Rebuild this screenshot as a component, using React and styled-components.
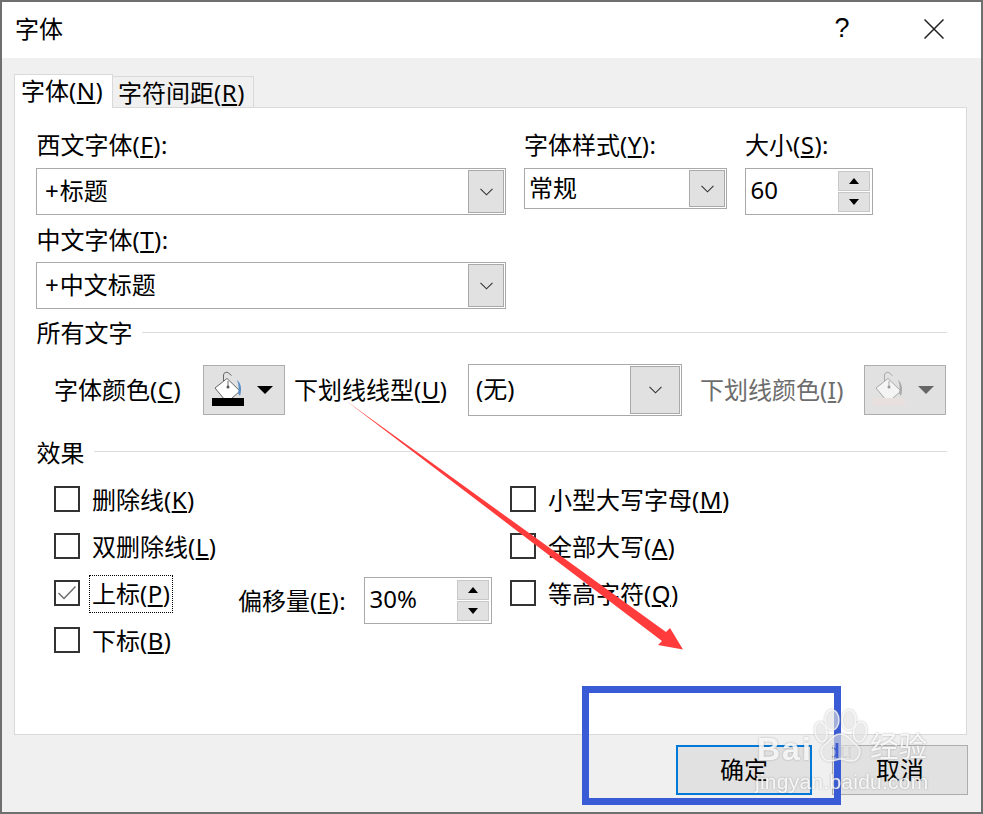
import React from "react";
import styled, { createGlobalStyle } from "styled-components";

const Global = createGlobalStyle`
  html, body { margin: 0; padding: 0; background: #f0f0f0; }
  * { box-sizing: border-box; }
  body { font-family: "Noto Sans", "Noto Sans CJK SC", sans-serif; font-size: 24px; color: #000; }
`;

const Dialog = styled.div`
  position: relative; width: 983px; height: 814px; overflow: hidden;
  display: flex; flex-direction: column;
  background: #f0f0f0;
  border: 2px solid #6f6f6f;
`;
const TitleBar = styled.header`
  height: 56px; flex: none; background: #fff; display: flex; align-items: center;
  padding-left: 13px; line-height: 1;
`;
const TitleText = styled.div` flex: 1; margin-top: -2px; `;
const HelpMark = styled.div` width: 82px; text-align: center; font-size: 27px; margin-top: -4px; margin-right: 41px; font-family: "Liberation Sans", sans-serif; `;
const CloseMark = styled.svg` width: 20px; height: 20px; margin-right: 37px; margin-top: -2px; `;
const Content = styled.div`
  flex: 1; display: flex; flex-direction: column; padding: 16px 13px 0 12px;
`;
const Tabs = styled.div` display: flex; align-items: flex-end; height: 34px; margin-bottom: -1px; position: relative; z-index: 1; `;
const Tab = styled.div`
  height: ${p => (p.$active ? 34 : 32)}px; width: ${p => p.$w}px; padding-left: ${p => p.$pad}px;
  background: ${p => (p.$active ? "#fff" : "#f0f0f0")};
  border: 1px solid #d9d9d9; border-bottom: ${p => (p.$active ? "none" : "1px solid #d9d9d9")};
  ${p => (p.$active ? "" : "border-left: none;")}
  line-height: 32px; white-space: nowrap;
`;
const Panel = styled.main`
  height: 628px; flex: none; margin-right: 1px; background: #fff; border: 1px solid #d9d9d9;
  padding: 23px 19px 0 21px;
`;
const FontGrid = styled.div`
  display: grid; grid-template-columns: 470px 203px 128px; column-gap: 18px; align-items: start;
`;
const Field = styled.div` display: flex; flex-direction: column; `;
const Label = styled.label`
  height: 28px; line-height: 28px; margin-top: ${p => p.$top ?? 0}px; margin-bottom: ${p => p.$gap ?? 9}px;
  padding-left: ${p => p.$pad ?? 0}px; white-space: nowrap;
`;
const Latin = styled.span` letter-spacing: .5px; `;
const Combo = styled.div`
  width: ${p => p.$w}px; height: ${p => p.$h}px; flex: none; display: flex; padding: 1px;
  border: 1px solid #a9a9a9; background: #fff;
`;
const ComboText = styled.div`
  flex: 1; padding-left: ${p => p.$pad}px; line-height: ${p => p.$lh}px; white-space: nowrap;
`;
const Plus = styled.span` margin-right: 1px; `;
const ComboButton = styled.div`
  width: ${p => p.$w}px; flex: none; display: flex; align-items: center; justify-content: center;
  background: #e1e1e1; border: 1px solid #a9a9a9;
`;
const Chevron = styled.svg` width: 13px; height: 8px; `;
const Spin = styled.div`
  width: 128px; height: 47px; flex: none; display: flex; border: 1px solid #a9a9a9; background: #fff; padding: 2px;
`;
const SpinValue = styled.div` flex: 1; padding-left: 2.500px; line-height: 37px; `;
const SpinButtons = styled.div` width: 32px; flex: none; display: flex; flex-direction: column; gap: 1px; `;
const SpinButton = styled.div`
  flex: 1; background: #e1e1e1; border: 1px solid #c8c8c8; display: flex; align-items: center; justify-content: center;
`;
const Tri = styled.svg` width: 10px; height: 6px; display: block; `;
const SectionHead = styled.div`
  display: flex; align-items: center; gap: 9px; height: 30px; margin-top: ${p => p.$top}px; padding-left: .5px; line-height: 30px;
`;
const Rule = styled.div` flex: 1; height: 1px; background: #dcdcdc; margin-top: ${p => p.$off}px; `;
const ColorRow = styled.div`
  display: grid; grid-template-columns: 167px 82px 183px 214px 182px 82px; align-items: center; height: 52px; margin-top: 16px;
`;
const RowLabel = styled.div`
  padding-left: ${p => p.$pad}px; white-space: nowrap; line-height: 30px; color: ${p => (p.$disabled ? "#6d6d6d" : "#000")};
`;
const ColorButton = styled.div`
  height: 50px; background: #e1e1e1; border: 1px solid #adadad; position: relative;
`;
const BucketIcon = styled.svg` width: 80px; height: 48px; display: block; `;
const Effects = styled.div` display: flex; margin-top: 7px; `;
const Col = styled.div` width: ${p => p.$w}px; padding-left: ${p => p.$pad}px; `;
const CheckRow = styled.div` height: 47px; display: flex; align-items: center; `;
const CheckItem = styled.div` display: flex; align-items: center; width: ${p => p.$w ?? "auto"}; flex: none; `;
const Box = styled.span`
  width: 26px; height: 26px; flex: none; border: 2px solid #333; background: #fff; display: flex; align-items: center; justify-content: center;
`;
const CheckText = styled.span`
  margin-left: ${p => (p.$focus ? 10 : 12)}px; margin-top: 2px; line-height: 30px; white-space: nowrap;
  ${p => (p.$focus ? "outline: 1px dotted #000; padding: 3px 2px;" : "")}
`;
const Offset = styled.div` display: flex; align-items: center; margin-top: 15px; `;
const OffsetLabel = styled.span` width: 126px; white-space: nowrap; line-height: 30px; margin-top: 2px; `;
const Footer = styled.footer` display: flex; justify-content: flex-end; gap: 20px; padding-top: 10px; `;
const Btn = styled.button`
  width: 136px; height: 50px; padding: 0; font: inherit; color: #000; background: #e1e1e1; line-height: 1;
  border: ${p => (p.$primary ? "2px solid #0078d7" : "1px solid #adadad")};
`;
const BlueFrame = styled.div`
  position: absolute; left: 580px; top: 684px; width: 259px; height: 119px; border: 7px solid #3a5bd6; pointer-events: none;
`;
const ArrowLayer = styled.svg` position: absolute; left: -2px; top: -2px; width: 983px; height: 814px; pointer-events: none; `;
const Watermark = styled.div`
  position: absolute; left: 753px; top: 707px; width: 180px; height: 90px; pointer-events: none; color: rgba(255,255,255,.85);
  filter: drop-shadow(0 0 1px rgba(110,110,110,.55));
`;
const Word = styled.span`
  position: absolute; left: ${p => p.$x}px; top: ${p => p.$y}px; font-family: "Liberation Sans", "Noto Sans CJK SC", sans-serif;
  font-size: ${p => p.$s}px; font-weight: ${p => p.$b ?? 400}; line-height: 1; white-space: nowrap; letter-spacing: ${p => p.$ls ?? 0}px;
`;
const Paw = styled.svg` position: absolute; left: 58px; top: 0; width: 56px; height: 54px; `;

const L = ({ children, k, tail = "" }) => <>{children}<Latin>(<u>{k}</u>){tail}</Latin></>;
const Chev = () => <Chevron viewBox="0 0 13 8"><path d="M.5.8 6.500 6.800 12.500.8" fill="none" stroke="#333" strokeWidth="1.100" /></Chevron>;
const Check = ({ on }) => (
  <Box>{on && <svg width="20" height="16" viewBox="0 0 20 16"><path d="M1.500 8 7 13.500 18.500 1.500" fill="none" stroke="#6a6a6a" strokeWidth="1.400" /></svg>}</Box>
);
const SpinBox = ({ v }) => (
  <Spin>
    <SpinValue>{v}</SpinValue>
    <SpinButtons>
      <SpinButton><Tri viewBox="0 0 10 6"><path d="M5 0 10 6H0z" /></Tri></SpinButton>
      <SpinButton><Tri viewBox="0 0 10 6"><path d="M0 0H10L5 6z" /></Tri></SpinButton>
    </SpinButtons>
  </Spin>
);
const Bucket = ({ off }) => (
  <BucketIcon viewBox="0 0 80 48">
    <path d="M11 22 23 12.500 36 25 23 36.500z" fill={off ? "#f4f4f4" : "#fff"} stroke={off ? "#a8a8a8" : "#666"} strokeWidth="1" />
    <path d="M19.500 15V9a3 3 0 0 1 5-2l3 2.500M24 15v6" fill="none" stroke={off ? "#a8a8a8" : "#666"} strokeWidth="1" />
    <circle cx="24" cy="21" r="1.500" fill={off ? "#999" : "#555"} />
    <path d="M33 14c4 3 5 9 3 16l-2-3c1-4 1-8-1-13z" fill={off ? "#aaa" : "#5b8fc7"} />
    <rect x="8" y="32" width="32" height="8" fill={off ? "#e8dfdf" : "#000"} />
    <path d="M53 20H69L61 28z" fill={off ? "#666" : "#000"} />
  </BucketIcon>
);

export default function App() {
  return (
    <>
      <Global />
      <Dialog>
        <TitleBar>
          <TitleText>字体</TitleText>
          <HelpMark>?</HelpMark>
          <CloseMark viewBox="0 0 20 20"><path d="M.5.5 19.500 19.500M19.500.5.5 19.500" stroke="#222" strokeWidth="1.500" fill="none" /></CloseMark>
        </TitleBar>
        <Content>
          <Tabs>
            <Tab $active $w={99} $pad={6}><L k="N">字体</L></Tab>
            <Tab $w={141} $pad={5}><L k="R">字符间距</L></Tab>
          </Tabs>
          <Panel>
            <FontGrid>
              <Field>
                <Label $pad={.5}><L k="F" tail=":">西文字体</L></Label>
                <Combo $w={470} $h={47}><ComboText $pad={7} $lh={41}><Plus>+</Plus>标题</ComboText><ComboButton $w={36}><Chev /></ComboButton></Combo>
                <Label $pad={.5} $gap={8} $top={11}><L k="T" tail=":">中文字体</L></Label>
                <Combo $w={470} $h={47}><ComboText $pad={7} $lh={41}><Plus>+</Plus>中文标题</ComboText><ComboButton $w={36}><Chev /></ComboButton></Combo>
              </Field>
              <Field>
                <Label><L k="Y" tail=":">字体样式</L></Label>
                <Combo $w={203} $h={41}><ComboText $pad={3} $lh={35}>常规</ComboText><ComboButton $w={36}><Chev /></ComboButton></Combo>
              </Field>
              <Field>
                <Label><L k="S" tail=":">大小</L></Label>
                <SpinBox v="60" />
              </Field>
            </FontGrid>
            <SectionHead $top={9}>所有文字<Rule $off={-2} /></SectionHead>
            <ColorRow>
              <RowLabel $pad={18}><L k="C">字体颜色</L></RowLabel>
              <ColorButton><Bucket /></ColorButton>
              <RowLabel $pad={9}><L k="U">下划线线型</L></RowLabel>
              <Combo $w={214} $h={52}><ComboText $pad={6} $lh={46}>(无)</ComboText><ComboButton $w={50}><Chev /></ComboButton></Combo>
              <RowLabel $pad={18} $disabled><L k="I">下划线颜色</L></RowLabel>
              <ColorButton><Bucket off /></ColorButton>
            </ColorRow>
            <SectionHead $top={22}>效果<Rule $off={-4} /></SectionHead>
            <Effects>
              <Col $w={474} $pad={18}>
                <CheckRow><CheckItem><Check /><CheckText><L k="K">删除线</L></CheckText></CheckItem></CheckRow>
                <CheckRow><CheckItem><Check /><CheckText><L k="L">双删除线</L></CheckText></CheckItem></CheckRow>
                <CheckRow>
                  <CheckItem $w="184px"><Check on /><CheckText $focus><L k="P">上标</L></CheckText></CheckItem>
                  <Offset><OffsetLabel><L k="E" tail=":">偏移量</L></OffsetLabel><SpinBox v="30%" /></Offset>
                </CheckRow>
                <CheckRow><CheckItem><Check /><CheckText><L k="B">下标</L></CheckText></CheckItem></CheckRow>
              </Col>
              <Col $w={400} $pad={0}>
                <CheckRow><CheckItem><Check /><CheckText><L k="M">小型大写字母</L></CheckText></CheckItem></CheckRow>
                <CheckRow><CheckItem><Check /><CheckText><L k="A">全部大写</L></CheckText></CheckItem></CheckRow>
                <CheckRow><CheckItem><Check /><CheckText><L k="Q">等高字符</L></CheckText></CheckItem></CheckRow>
              </Col>
            </Effects>
          </Panel>
          <Footer>
            <Btn $primary>确定</Btn>
            <Btn>取消</Btn>
          </Footer>
        </Content>
        <BlueFrame />
        <ArrowLayer viewBox="0 0 983 814">
          <path d="M345 400 666 632 670 628 683 649.500 658 645 662 641z" fill="#ff3b3b" />
        </ArrowLayer>
        <Watermark>
          <Word $x={2} $y={24} $s={32} $b={700} $ls={2}>Bai</Word>
          <Paw viewBox="0 0 56 54">
            <defs>
              <mask id="du-hole">
                <rect width="56" height="54" fill="#fff" />
                <text x="14" y="49" fontFamily="Liberation Sans" fontWeight="700" fontSize="21" fill="#000">du</text>
              </mask>
            </defs>
            <g fill="rgba(255,255,255,.5)" stroke="rgba(255,255,255,.75)" strokeWidth="1.500">
              <ellipse cx="8" cy="23" rx="6" ry="10" transform="rotate(-10 8 23)" />
              <ellipse cx="19" cy="11" rx="7" ry="10" />
              <ellipse cx="36" cy="11" rx="7" ry="10" />
              <ellipse cx="47" cy="23" rx="6.500" ry="10" transform="rotate(10 47 23)" />
              <path mask="url(#du-hole)" d="M27.500 25c8 0 10 7 16 11 7 5 3 17-7 16-4 0-6-2-9-2s-5 2-9 2c-10 1-14-11-7-16 6-4 8-11 16-11z" />
            </g>
          </Paw>
          <Word $x={115} $y={24} $s={28.500}>经验</Word>
          <Word $x={0} $y={62} $s={21} $ls={.25}>jingyan.baidu.com</Word>
        </Watermark>
      </Dialog>
    </>
  );
}
